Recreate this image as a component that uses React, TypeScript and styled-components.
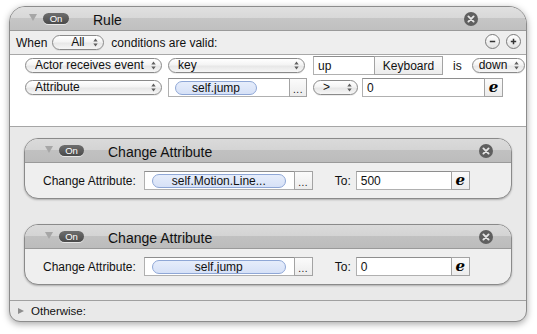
import React from 'react';
import styled, { createGlobalStyle } from 'styled-components';

const Global = createGlobalStyle`
  html, body { margin: 0; padding: 0; background: #ffffff; }
  body { font-family: "Liberation Sans", Arial, sans-serif; font-size: 12px; color: #111; }
  * { box-sizing: border-box; }
`;

const Page = styled.div`
  width: 537px;
  height: 334px;
  padding: 6px 0 0 9px;
`;

const Panel = styled.div`
  width: 518px;
  border: 1px solid #8c8c8c;
  border-radius: 16px 18px 11px 11px;
  background: #e9e9e9;
  box-shadow: 0 2px 7px rgba(0, 0, 0, 0.35);
  overflow: hidden;
`;

const Header = styled.div<{ $sub?: boolean }>`
  height: 24px;
  display: flex;
  align-items: center;
  border-bottom: 1px solid #9a9a9a;
  background: ${p =>
    p.$sub
      ? 'linear-gradient(to bottom, #dadada 0, #d4d4d4 11px, #c1c1c1 11px, #bcbcbc 100%)'
      : 'linear-gradient(to bottom, #e0e0e0 0, #d8d8d8 11px, #c6c6c6 11px, #c0c0c0 100%)'};
  padding-left: ${p => (p.$sub ? 20 : 19)}px;
  padding-right: ${p => (p.$sub ? 18 : 48)}px;
`;

const Disclosure = styled.span`
  width: 0;
  height: 0;
  border-left: 4px solid transparent;
  border-right: 4px solid transparent;
  border-top: 7px solid #a6a6a6;
  margin-top: -2px;
`;

const Badge = styled.span<{ $w: number }>`
  width: ${p => p.$w}px;
  height: 11px;
  margin-left: 6px;
  border-radius: 6px;
  background: linear-gradient(#6e6e6e, #4a4a4a);
  color: #fff;
  font-size: 9.5px;
  line-height: 11px;
  text-align: center;
  box-shadow: 0 1px 0 rgba(255, 255, 255, 0.6);
`;

const Title = styled.span`
  margin-left: 24px;
  font-size: 14px;
  color: #111;
  flex: 1;
  padding-top: 2px;
`;

const CloseBtn = styled.svg`
  width: 14px;
  height: 14px;
  display: block;
`;

const Close = () => (
  <CloseBtn viewBox="0 0 14 14">
    <circle cx="7" cy="7" r="7" fill="#5f5f5f" />
    <path d="M4.4 4.4 L9.6 9.6 M9.6 4.4 L4.4 9.6" stroke="#e6e6e6" strokeWidth="1.9" strokeLinecap="round" />
  </CloseBtn>
);

const WhenRow = styled.div`
  height: 24px;
  display: flex;
  align-items: center;
  background: #eeeeee;
  border-bottom: 1px solid #a8a8a8;
  padding: 0 5px 0 6px;
`;

const Text = styled.span<{ $ml?: number; $size?: number }>`
  margin-left: ${p => p.$ml ?? 0}px;
  font-size: ${p => p.$size ?? 12}px;
  white-space: nowrap;
`;

const Spacer = styled.span`
  flex: 1;
`;

const RoundBtn = styled.span<{ $ml?: number }>`
  width: 15px;
  height: 15px;
  margin-left: ${p => p.$ml ?? 0}px;
  border-radius: 50%;
  border: 1px solid #7a7a7a;
  background: linear-gradient(#ffffff, #e2e2e2);
  display: flex;
  align-items: center;
  justify-content: center;
  margin-top: -2px;
`;

const Glyph = styled.svg`
  width: 7px;
  height: 7px;
  display: block;
`;

const Conditions = styled.div`
  height: 71px;
  background: #ffffff;
  padding: 1px 0 0 15px;
  display: flex;
  flex-direction: column;
  gap: 3px;
`;

const Row = styled.div`
  height: 19px;
  display: flex;
  align-items: center;
`;

const PopupBox = styled.div<{ $w: number; $ml?: number; $pl: number }>`
  width: ${p => p.$w}px;
  height: 15px;
  margin-left: ${p => p.$ml ?? 0}px;
  border: 1px solid #8a8a8a;
  border-radius: 8px;
  background: linear-gradient(#ffffff, #f4f4f4 45%, #e7e7e7 55%, #f6f6f6);
  display: flex;
  align-items: center;
  padding: 0 5px 0 ${p => p.$pl}px;
  box-shadow: 0 1px 0 rgba(0, 0, 0, 0.07);
`;

const PopupLabel = styled.span<{ $center?: boolean }>`
  flex: 1;
  white-space: nowrap;
  overflow: hidden;
  font-size: 12px;
  line-height: 13px;
  text-align: ${p => (p.$center ? 'center' : 'left')};
`;

const Arrows = styled.svg`
  width: 5px;
  height: 9px;
  display: block;
  flex: none;
`;

const Popup = ({ w, ml, label, center, pl = 9 }: { w: number; ml?: number; label: string; center?: boolean; pl?: number }) => (
  <PopupBox $w={w} $ml={ml} $pl={pl}>
    <PopupLabel $center={center}>{label}</PopupLabel>
    <Arrows viewBox="0 0 5 9">
      <path d="M0.3 3.6 L2.5 0.6 L4.7 3.6 Z M0.3 5.4 L2.5 8.4 L4.7 5.4 Z" fill="#606060" />
    </Arrows>
  </PopupBox>
);

const Field = styled.div<{ $w: number; $ml?: number }>`
  width: ${p => p.$w}px;
  height: 19px;
  margin-left: ${p => p.$ml ?? 0}px;
  background: #ffffff;
  border: 1px solid #b0b0b0;
  border-top-color: #8e8e8e;
  display: flex;
  align-items: center;
  padding-left: 4px;
  font-size: 12px;
  white-space: nowrap;
`;

const Token = styled.span<{ $w: number; $ml: number }>`
  width: ${p => p.$w}px;
  height: 14px;
  margin-left: ${p => p.$ml}px;
  border: 1px solid #8fa7d6;
  border-radius: 8px;
  background: linear-gradient(#e6edfb, #d6e1f7);
  font-size: 12px;
  line-height: 12px;
  text-align: center;
  white-space: nowrap;
  overflow: hidden;
`;

const SideBtn = styled.div<{ $w: number }>`
  width: ${p => p.$w}px;
  height: 19px;
  margin-left: -1px;
  border: 1px solid #a3a3a3;
  background: linear-gradient(#fbfbfb, #ececec);
  display: flex;
  align-items: center;
  justify-content: center;
  font-size: 12px;
  white-space: nowrap;
`;

const Dots = styled.span`
  font-size: 10px;
  line-height: 10px;
  padding-top: 5px;
  letter-spacing: 0.5px;
`;

const EGlyph = styled.span`
  font-family: "DejaVu Serif", serif;
  font-weight: bold;
  font-style: italic;
  font-size: 15px;
  line-height: 15px;
  color: #000;
`;

const Actions = styled.div`
  border-top: 1px solid #a6a6a6;
  padding: 11px 14px 15px 14px;
  display: flex;
  flex-direction: column;
  gap: 25px;
  background: #e9e9e9;
`;

const SubPanel = styled.div`
  border: 1px solid #8a8a8a;
  border-radius: 14px;
  background: #efefef;
  overflow: hidden;
  box-shadow: 0 1px 2px rgba(0, 0, 0, 0.25);
`;

const SubBody = styled.div`
  height: 35px;
  display: flex;
  align-items: center;
  padding-left: 18px;
`;

const Otherwise = styled.div`
  height: 21px;
  border-top: 1px solid #a0a0a0;
  display: flex;
  align-items: center;
  padding-left: 8px;
`;

const RightTri = styled.span`
  width: 0;
  height: 0;
  border-top: 3.5px solid transparent;
  border-bottom: 3.5px solid transparent;
  border-left: 6px solid #8e8e8e;
`;

const ChangeAttribute = ({ token, value }: { token: string; value: string }) => (
  <SubPanel>
    <Header $sub>
      <Disclosure />
      <Badge $w={25}>On</Badge>
      <Title>Change Attribute</Title>
      <Close />
    </Header>
    <SubBody>
      <Text>Change Attribute:</Text>
      <Field $w={151} $ml={8}>
        <Token $w={134} $ml={3}>{token}</Token>
      </Field>
      <SideBtn $w={19}><Dots>...</Dots></SideBtn>
      <Text $ml={22}>To:</Text>
      <Field $w={96} $ml={5}>{value}</Field>
      <SideBtn $w={19}><EGlyph>e</EGlyph></SideBtn>
    </SubBody>
  </SubPanel>
);

export default function App() {
  return (
    <>
      <Global />
      <Page>
        <Panel>
          <Header>
            <Disclosure />
            <Badge $w={26}>On</Badge>
            <Title>Rule</Title>
            <Close />
          </Header>
          <WhenRow>
            <Text>When</Text>
            <Popup w={52} ml={5} label="All" center />
            <Text $ml={7}>conditions are valid:</Text>
            <Spacer />
            <RoundBtn>
              <Glyph viewBox="0 0 7 7">
                <path d="M0.8 3.5 H6.2" stroke="#333" strokeWidth="1.5" />
              </Glyph>
            </RoundBtn>
            <RoundBtn $ml={6}>
              <Glyph viewBox="0 0 7 7">
                <path d="M0.8 3.5 H6.2 M3.5 0.8 V6.2" stroke="#333" strokeWidth="1.5" />
              </Glyph>
            </RoundBtn>
          </WhenRow>
          <Conditions>
            <Row>
              <Popup w={137} label="Actor receives event" />
              <Popup w={137} ml={6} label="key" />
              <Field $w={62} $ml={8}>up</Field>
              <SideBtn $w={69}>Keyboard</SideBtn>
              <Text $ml={10}>is</Text>
              <Popup w={53} ml={10} label="down" pl={6} />
            </Row>
            <Row>
              <Popup w={137} label="Attribute" />
              <Field $w={122} $ml={6}>
                <Token $w={82} $ml={2}>self.jump</Token>
              </Field>
              <SideBtn $w={18}><Dots>...</Dots></SideBtn>
              <Popup w={45} ml={6} label=">" />
              <Field $w={123} $ml={4}>0</Field>
              <SideBtn $w={19}><EGlyph>e</EGlyph></SideBtn>
            </Row>
          </Conditions>
          <Actions>
            <ChangeAttribute token="self.Motion.Line..." value="500" />
            <ChangeAttribute token="self.jump" value="0" />
          </Actions>
          <Otherwise>
            <RightTri />
            <Text $ml={7} $size={11.5}>Otherwise:</Text>
          </Otherwise>
        </Panel>
      </Page>
    </>
  );
}
